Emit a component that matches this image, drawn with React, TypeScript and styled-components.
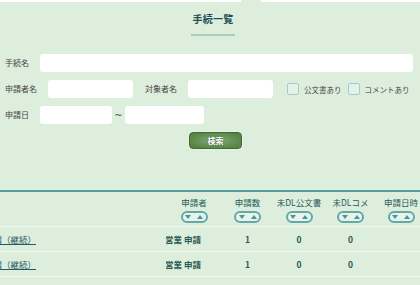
import React from "react";
import styled, { createGlobalStyle } from "styled-components";

const GlobalStyle = createGlobalStyle`
  html, body {
    margin: 0;
    padding: 0;
    background: #ddeedd;
    overflow: hidden;
  }
  body {
    font-family: "Noto Sans CJK JP", "Noto Sans", sans-serif;
    color: #444;
  }
`;

const PageSt = styled.div`
  width: 420px;
  height: 285px;
  overflow: hidden;
`;

const TopBar = styled.div`
  display: flex;
  height: 2px;
  gap: 20px;
  .seg {
    background: #ffffff;
  }
  .seg:first-child {
    width: 241px;
  }
  .seg:last-child {
    flex: 1;
  }
`;

const TitleBlock = styled.div`
  display: flex;
  flex-direction: column;
  align-items: center;
  padding: 10px 0 0 6px;
  h1 {
    margin: 0;
    font-size: 10px;
    line-height: 14px;
    font-weight: bold;
    color: #1c4f55;
    letter-spacing: 0.2px;
  }
  .underline {
    width: 44px;
    height: 2px;
    margin-top: 8px;
    background: #a8d0c0;
  }
`;

const Form = styled.div`
  display: flex;
  flex-direction: column;
  gap: 8px;
  padding: 0 7px 0 5px;
  margin-top: 18px;
`;

const Row = styled.div`
  display: flex;
  align-items: center;
  height: 18px;
`;

const Label = styled.span<{ $w: number; $ml?: number }>`
  width: ${(p) => p.$w}px;
  margin-left: ${(p) => p.$ml || 0}px;
  flex-shrink: 0;
  font-size: 8px;
  line-height: 18px;
  color: #444;
  white-space: nowrap;
`;

const Input = styled.div<{ $w?: number }>`
  height: 18px;
  border-radius: 3px;
  background: #ffffff;
  ${(p) => (p.$w ? `width: ${p.$w}px; flex-shrink: 0;` : `flex: 1;`)}
`;

const Tilde = styled.span`
  width: 13px;
  text-align: center;
  font-family: "DejaVu Sans", sans-serif;
  font-size: 10px;
  color: #555;
`;

const Check = styled.label<{ $ml: number }>`
  display: flex;
  align-items: center;
  gap: 5px;
  margin-left: ${(p) => p.$ml}px;
  font-size: 7.5px;
  color: #444;
  white-space: nowrap;
  .box {
    width: 10px;
    height: 10px;
    border: 1px solid #a3cbd6;
    border-radius: 2px;
    background: #e4f2e7;
  }
`;

const ButtonRow = styled.div`
  display: flex;
  justify-content: center;
  padding-left: 11px;
  margin-top: 8px;
`;

const SearchButton = styled.button`
  width: 53px;
  height: 17px;
  padding: 0;
  border: 1px solid #3f6b33;
  border-radius: 4px;
  box-shadow: 0 0 0 1px #e8f2e2;
  background: radial-gradient(ellipse at center, #8aae7c 0%, #648f53 55%, #4e7b3f 100%);
  color: #ffffff;
  font-family: "Noto Sans CJK JP", sans-serif;
  font-size: 8px;
  font-weight: bold;
  line-height: 15px;
  text-shadow: 0 0 2px #2d4d25;
`;

const Table = styled.div`
  margin-top: 41px;
  width: 426px;
  border-top: 2px solid #529e9c;
  display: grid;
  grid-template-columns: 40px 126px 56px 51px 52px 51px 50px;
`;

const HeadCell = styled.div`
  height: 35px;
  display: flex;
  flex-direction: column;
  align-items: center;
  padding-top: 4px;
  box-sizing: border-box;
  border-bottom: 1px solid #eef7ef;
  .title {
    font-size: 8.5px;
    line-height: 12px;
    color: #1e5c5c;
    white-space: nowrap;
  }
`;

const SortPill = styled.div`
  margin-top: 3px;
  width: 27px;
  height: 12px;
  box-sizing: border-box;
  border: 2px solid #62a9a8;
  border-radius: 7px;
  background: #e6f3ea;
  display: flex;
  align-items: center;
  justify-content: center;
  gap: 6px;
`;

const Tri = styled.span<{ $up?: boolean }>`
  width: 0;
  height: 0;
  border-left: 3px solid transparent;
  border-right: 3px solid transparent;
  ${(p) =>
    p.$up
      ? `border-bottom: 4px solid #4f9391;`
      : `border-top: 4px solid #4f9391;`}
`;

const Cell = styled.div<{ $align?: string; $pr?: number }>`
  height: 24px;
  display: flex;
  align-items: center;
  justify-content: ${(p) => p.$align || "center"};
  padding-right: ${(p) => p.$pr || 0}px;
  overflow: hidden;
  white-space: nowrap;
  border-bottom: 1px solid #eef7ef;
  font-size: 8.5px;
  font-weight: bold;
  color: #2b5954;
  a {
    color: #1f5a66;
    font-weight: normal;
    text-decoration: underline;
  }
`;

const columns = ["", "", "申請者", "申請数", "未DL公文書", "未DLコメ", "申請日時"];

const rows = [
  { name: "申請（継続）", user: "営業 申請", count: 1, doc: 0, com: 0 },
  { name: "申請（継続）", user: "営業 申請", count: 1, doc: 0, com: 0 },
  { name: "申請（継続）", user: "営業 申請", count: 1, doc: 0, com: 0 },
];

export default function App() {
  return (
    <PageSt>
      <GlobalStyle />
      <TopBar>
        <div className="seg" />
        <div className="seg" />
      </TopBar>
      <TitleBlock>
        <h1>手続一覧</h1>
        <div className="underline" />
      </TitleBlock>
      <Form>
        <Row>
          <Label $w={35}>手続名</Label>
          <Input />
        </Row>
        <Row>
          <Label $w={43}>申請者名</Label>
          <Input $w={85} />
          <Label $w={43} $ml={12}>
            対象者名
          </Label>
          <Input $w={85} />
          <Check $ml={14}>
            <span className="box" />
            公文書あり
          </Check>
          <Check $ml={6}>
            <span className="box" />
            コメントあり
          </Check>
        </Row>
        <Row>
          <Label $w={35}>申請日</Label>
          <Input $w={72} />
          <Tilde>~</Tilde>
          <Input $w={79} />
        </Row>
      </Form>
      <ButtonRow>
        <SearchButton>検索</SearchButton>
      </ButtonRow>
      <Table>
        {columns.map((c, i) => (
          <HeadCell key={i}>
            {c && (
              <>
                <span className="title">{c}</span>
                <SortPill>
                  <Tri />
                  <Tri $up />
                </SortPill>
              </>
            )}
          </HeadCell>
        ))}
        {rows.map((r, i) => (
          <React.Fragment key={i}>
            <Cell $align="flex-end" $pr={4}>
              <a>{r.name}</a>
            </Cell>
            <Cell />
            <Cell $align="flex-end" $pr={21}>
              {r.user}
            </Cell>
            <Cell>{r.count}</Cell>
            <Cell>{r.doc}</Cell>
            <Cell>{r.com}</Cell>
            <Cell />
          </React.Fragment>
        ))}
      </Table>
    </PageSt>
  );
}
